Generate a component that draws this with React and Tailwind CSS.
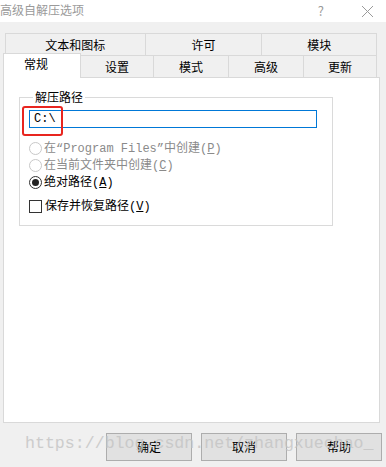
import React from "react";

const cjk = { fontFamily: '"Noto Sans CJK SC", "Noto Sans", sans-serif' };
const mono = { fontFamily: '"Liberation Mono", "Noto Sans CJK SC", monospace' };

function Radio({ checked, disabled, children }) {
  return (
    <div className={"flex items-center h-[17px] " + (disabled ? "text-[#8a8a8a]" : "text-black")}>
      <span
        className={
          "w-[13px] h-[13px] rounded-full border bg-white flex items-center justify-center mr-[2px] " +
          (disabled ? "border-[#c8c8c8]" : "border-[#333]")
        }
      >
        {checked && <span className="w-[7px] h-[7px] rounded-full bg-[#222]" />}
      </span>
      <span className="text-[12px] leading-none whitespace-nowrap" style={mono}>{children}</span>
    </div>
  );
}

export default function App() {
  return (
    <div className="w-[386px] h-[467px] bg-[#f0f0f0] relative overflow-hidden" style={cjk}>
      {/* title bar */}
      <div className="h-[22px] bg-white flex items-center">
        <span className="text-[12px] text-[#9a9a9a] leading-none -mt-[3px]">高级自解压选项</span>
        <span className="ml-auto text-[13px] text-[#9a9a9a] mr-[37px]">?</span>
        <svg width="13" height="13" viewBox="0 0 13 13" className="mr-[12px]">
          <path d="M1 1 L12 12 M12 1 L1 12" stroke="#9a9a9a" strokeWidth="1" />
        </svg>
      </div>

      {/* tabs */}
      <div className="mt-[11px] pl-[3px]">
        <div className="ml-[2px] flex w-[372px] h-[22px] border-t border-l border-[#d9d9d9] text-[12px] text-black">
          <div className="w-[140px] border-r border-[#d9d9d9] flex items-center justify-center">文本和图标</div>
          <div className="w-[117px] border-r border-[#d9d9d9] flex items-center justify-center">许可</div>
          <div className="w-[115px] border-r border-[#d9d9d9] flex items-center justify-center">模块</div>
        </div>
        <div className="-mt-[2px] flex items-end h-[24px] text-[12px] text-black">
          <div className="relative z-10 w-[78px] h-[25px] -mb-px bg-white border-t border-l border-r border-[#d9d9d9] flex items-center justify-center pb-[4px] pr-[12px]">常规</div>
          <div className="w-[73px] h-[22px] border-t border-r border-[#d9d9d9] flex items-center justify-center">设置</div>
          <div className="w-[75px] h-[22px] border-t border-r border-[#d9d9d9] flex items-center justify-center">模式</div>
          <div className="w-[75px] h-[22px] border-t border-r border-[#d9d9d9] flex items-center justify-center">高级</div>
          <div className="w-[73px] h-[22px] border-t border-r border-[#d9d9d9] flex items-center justify-center">更新</div>
        </div>

        {/* panel */}
        <div className="w-[377px] h-[346px] bg-white border border-[#d9d9d9] pl-[15px] pt-[10px]">
          <fieldset className="relative w-[314px] h-[138px] border border-[#dadada] pl-[9px] pr-[15px]">
            <legend className="ml-[4px] px-[2px] text-[12px] text-black leading-[18px]">解压路径</legend>
            <div className="mt-[4px] h-[18px] border border-[#0078d7] flex items-center pl-[4px]">
              <span className="text-[12px] leading-none text-black" style={mono}>C:\</span>
            </div>
            <div className="mt-[12px] flex flex-col">
              <Radio disabled>在“Program Files”中创建(<u>P</u>)</Radio>
              <Radio disabled>在当前文件夹中创建(<u>C</u>)</Radio>
              <Radio checked>绝对路径(<u>A</u>)</Radio>
              <div className="mt-[7px] flex items-center h-[17px]">
                <span className="w-[13px] h-[13px] border border-[#333] bg-white mr-[3px]" />
                <span className="text-[12px] leading-none whitespace-nowrap" style={mono}>保存并恢复路径(<u>V</u>)</span>
              </div>
            </div>
            <div className="absolute left-[2px] top-[0px] w-[41px] h-[30px] border-2 border-[#e8251f] rounded-[3px]" />
          </fieldset>
        </div>
      </div>

      {/* buttons */}
      <div className="mt-[10px] flex justify-end gap-[9px] pr-[4px]">
        {["确定", "取消", "帮助"].map((t) => (
          <div key={t} className="w-[86px] h-[28px] bg-[#e1e1e1] border border-[#adadad] flex items-center justify-center text-[12px] text-black">
            {t}
          </div>
        ))}
      </div>

      {/* watermark */}
      <div
        className="absolute left-[25px] top-[436px] text-[16.6px] leading-none text-[#c4c4c4] opacity-80 pointer-events-none"
        style={{ fontFamily: '"Liberation Mono", monospace' }}
      >
        https://blog.csdn.net/zhangxuechao_
      </div>
    </div>
  );
}
